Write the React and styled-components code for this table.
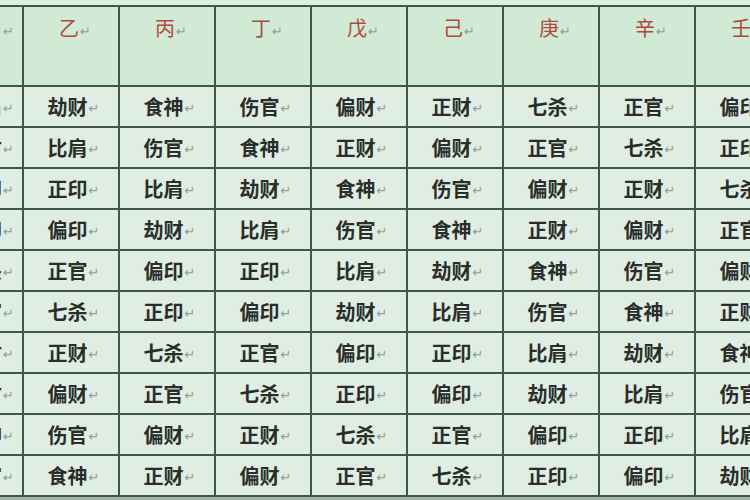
import React from "react";
import styled, { createGlobalStyle } from "styled-components";

const GlobalStyle = createGlobalStyle`
  html, body {
    margin: 0;
    padding: 0;
    background: #a3b8aa;
  }
  body {
    font-family: "Noto Sans CJK SC", "Noto Sans", sans-serif;
  }
`;

const Page = styled.div`
  width: 750px;
  height: 500px;
  overflow: hidden;
  background: #a3b8aa;
`;

const TopStrip = styled.div`
  height: 5px;
  background: #dcede1;
`;

const Grid = styled.div`
  display: grid;
  grid-template-columns: 22px repeat(8, 94px);
  grid-template-rows: 78px repeat(10, 39px);
  gap: 2px;
  width: max-content;
  padding: 2px 0;
  background: #3f5747;
`;

const Cell = styled.div`
  display: flex;
  align-items: ${(p) => (p.$head ? "flex-start" : "center")};
  justify-content: ${(p) => (p.$edge ? "flex-end" : "center")};
  padding-top: ${(p) => (p.$head ? "8px" : "0")};
  padding-left: ${(p) => (p.$edge ? "0" : p.$head ? "8px" : "5px")};
  padding-right: ${(p) => (p.$edge ? "8px" : "0")};
  overflow: hidden;
  white-space: nowrap;
  background: ${(p) => (p.$head ? "#d1ead6" : "#e0ede3")};
`;

const Word = styled.span`
  font-size: 20px;
  line-height: 26px;
  font-weight: ${(p) => (p.$head ? 400 : 700)};
  color: ${(p) => (p.$head ? "#b04a3c" : "#2a2e2b")};
`;

const Mark = styled.span`
  font-family: "DejaVu Sans", sans-serif;
  font-size: 13px;
  line-height: 26px;
  margin-left: 1px;
  padding-top: 4px;
  color: #8b9e93;
`;

const stems = ["甲", "乙", "丙", "丁", "戊", "己", "庚", "辛", "壬"];

const table = [
  ["比肩", "劫财", "食神", "伤官", "偏财", "正财", "七杀", "正官", "偏印"],
  ["劫财", "比肩", "伤官", "食神", "正财", "偏财", "正官", "七杀", "正印"],
  ["偏印", "正印", "比肩", "劫财", "食神", "伤官", "偏财", "正财", "七杀"],
  ["正印", "偏印", "劫财", "比肩", "伤官", "食神", "正财", "偏财", "正官"],
  ["七杀", "正官", "偏印", "正印", "比肩", "劫财", "食神", "伤官", "偏财"],
  ["正官", "七杀", "正印", "偏印", "劫财", "比肩", "伤官", "食神", "正财"],
  ["偏财", "正财", "七杀", "正官", "偏印", "正印", "比肩", "劫财", "食神"],
  ["正财", "偏财", "正官", "七杀", "正印", "偏印", "劫财", "比肩", "伤官"],
  ["食神", "伤官", "偏财", "正财", "七杀", "正官", "偏印", "正印", "比肩"],
  ["伤官", "食神", "正财", "偏财", "正官", "七杀", "正印", "偏印", "劫财"],
];

function Entry({ text, head, edge }) {
  return (
    <Cell $head={head} $edge={edge}>
      <Word $head={head}>{text}</Word>
      <Mark>↵</Mark>
    </Cell>
  );
}

export default function App() {
  return (
    <Page>
      <GlobalStyle />
      <TopStrip />
      <Grid>
        {stems.map((s, i) => (
          <Entry key={s} text={s} head edge={i === 0} />
        ))}
        {table.map((row, r) =>
          row.map((v, c) => <Entry key={r + "-" + c} text={v} edge={c === 0} />)
        )}
      </Grid>
    </Page>
  );
}
